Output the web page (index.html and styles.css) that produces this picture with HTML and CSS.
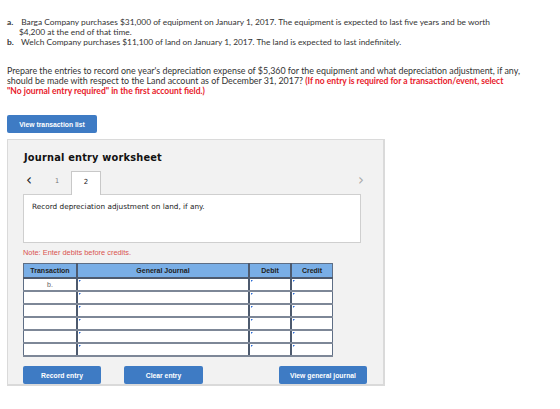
FILE: index.html
```html
<!DOCTYPE html>
<html lang="en">
<head>
  <meta charset="UTF-8" />
  <title>Journal entry worksheet</title>
  <link rel="stylesheet" href="styles.css">
</head>
<body>
  <div class="problem">
    <p class="item"><b>a.</b> Barga Company purchases $31,000 of equipment on January 1, 2017. The equipment is expected to last five years and be worth $4,200 at the end of that time.</p>
    <p class="item"><b>b.</b> Welch Company purchases $11,100 of land on January 1, 2017. The land is expected to last indefinitely.</p>
  </div>

  <p class="question">
    Prepare the entries to record one year's depreciation expense of $5,360 for the equipment and what depreciation adjustment, if any, should be made with respect to the Land account as of December 31, 2017?
    <span class="warn">(If no entry is required for a transaction/event, select <span class="keep">"No journal entry required"</span> in the first account field.)</span>
  </p>

  <button class="btn btn-list">View transaction list</button>

  <div class="worksheet">
    <h2>Journal entry worksheet</h2>

    <div class="tabs">
      <span class="arrow">&lsaquo;</span>
      <span class="tab">1</span>
      <span class="tab active">2</span>
      <span class="arrow next">&rsaquo;</span>
    </div>

    <div class="desc">Record depreciation adjustment on land, if any.</div>

    <p class="note">Note: Enter debits before credits.</p>

    <table class="journal">
      <thead>
        <tr>
          <th class="c-tr">Transaction</th>
          <th class="c-gj">General Journal</th>
          <th class="c-amt">Debit</th>
          <th class="c-amt">Credit</th>
        </tr>
      </thead>
      <tbody>
        <tr><td class="c-tr">b.</td><td class="field"></td><td class="field"></td><td class="field"></td></tr>
        <tr><td class="c-tr"></td><td class="field"></td><td class="field"></td><td class="field"></td></tr>
        <tr><td class="c-tr"></td><td class="field"></td><td class="field"></td><td class="field"></td></tr>
        <tr><td class="c-tr"></td><td class="field"></td><td class="field"></td><td class="field"></td></tr>
        <tr><td class="c-tr"></td><td class="field"></td><td class="field"></td><td class="field"></td></tr>
        <tr><td class="c-tr"></td><td class="field"></td><td class="field"></td><td class="field"></td></tr>
      </tbody>
    </table>

    <div class="actions">
      <button class="btn btn-record">Record entry</button>
      <button class="btn btn-clear">Clear entry</button>
      <button class="btn btn-view">View general journal</button>
    </div>
  </div>
</body>
</html>
```

FILE: styles.css
```css
body {
  margin: 0;
  padding: 17px 0 0 7px;
  font-family: Lato, 'Open Sans', sans-serif;
  font-size: 8.4px;
  color: #333;
  background: #fff;
}

p {
  margin: 0;
}

.problem {
  width: 500px;
}

.item {
  line-height: 10px;
  padding-left: 12px;
  text-indent: -12px;
}

.item b {
  display: inline-block;
  width: 12px;
  text-indent: 0;
}

.question {
  margin-top: 19px;
  width: 528px;
  font-size: 8.9px;
  line-height: 10px;
}

.warn {
  color: #e8202a;
  font-weight: bold;
  font-size: 8.5px;
}

.keep {
  white-space: nowrap;
}

.btn {
  display: inline-block;
  background-color: #3e7bc4;
  color: #fff;
  font-family: 'Liberation Sans', Arial, sans-serif;
  font-size: 6.8px;
  font-weight: bold;
  border: none;
  border-radius: 2px;
  padding: 0;
  height: 18px;
  cursor: pointer;
}

.btn-list {
  margin-top: 19px;
  width: 90px;
}

.worksheet {
  margin-top: 6px;
  width: 360px;
  height: 244px;
  padding: 0 0 0 15px;
  background: #f2f2f2;
  border: 1px solid #dadada;
  border-width: 1px 2px 2px 1px;
}

h2 {
  margin: 12px 0 0 1px;
  font-family: 'DejaVu Sans', Verdana, sans-serif;
  font-size: 9.8px;
  font-weight: bold;
  color: #111;
  letter-spacing: 0.2px;
}

.tabs {
  display: flex;
  align-items: flex-end;
  height: 24px;
  margin-top: 7px;
  font-family: 'DejaVu Sans', Verdana, sans-serif;
  font-size: 6.5px;
  color: #333;
}

.arrow {
  font-size: 15px;
  line-height: 14px;
  width: 17px;
  padding: 0 0 7px 3px;
  color: #222;
}

.arrow.next {
  margin-left: auto;
  margin-right: 19px;
  width: auto;
  color: #aaa;
}

.tab {
  width: 28px;
  height: 23px;
  line-height: 20px;
  text-align: center;
  color: #777;
  font-size: 6.5px;
}

.tab.active {
  background: #fff;
  border: 1px solid #c8c8c8;
  border-bottom: none;
  color: #222;
  font-size: 7px;
  position: relative;
  top: 1px;
}

.desc {
  width: 328px;
  height: 40px;
  padding: 7px 0 0 8px;
  background: #fff;
  border: 1px solid #cfcfcf;
  font-family: 'DejaVu Sans', Verdana, sans-serif;
  font-size: 7.3px;
  color: #222;
}

.note {
  margin-top: 5px;
  font-family: 'Liberation Sans', Arial, sans-serif;
  font-size: 7.4px;
  color: #d9534f;
}

.journal {
  margin-top: 6px;
  border-collapse: collapse;
  font-family: 'Liberation Sans', Arial, sans-serif;
  font-size: 7px;
  border: 1px solid #5e6e85;
}

.journal th {
  background: #79aee6;
  height: 13px;
  padding: 0;
  font-weight: bold;
  color: #222;
  border-left: 2px solid #4d5a6e;
  border-bottom: 2px solid #4d5a6e;
}

.journal td {
  background: #fff;
  height: 11px;
  padding: 0;
  border-left: 2px solid #4d5a6e;
  border-bottom: 2px solid #7d8797;
}

.journal .c-tr {
  width: 52px;
  text-align: center;
  border-left: none;
}

.journal td.c-tr {
  color: #666;
}

.c-gj {
  width: 170px;
}

.c-amt {
  width: 40px;
}

.journal td.field {
  position: relative;
}

/* little blue marker in the corner of each entry field */
.field::before {
  content: "";
  position: absolute;
  left: 1px;
  top: 1px;
  border-left: 2px solid #2a6bd6;
  border-bottom: 2px solid transparent;
  height: 0;
}

.actions {
  display: flex;
  margin-top: 9px;
}

.btn-record {
  width: 78px;
}

.btn-clear {
  width: 79px;
  margin-left: 23px;
}

.btn-view {
  width: 88px;
  margin-left: 76px;
}
```
